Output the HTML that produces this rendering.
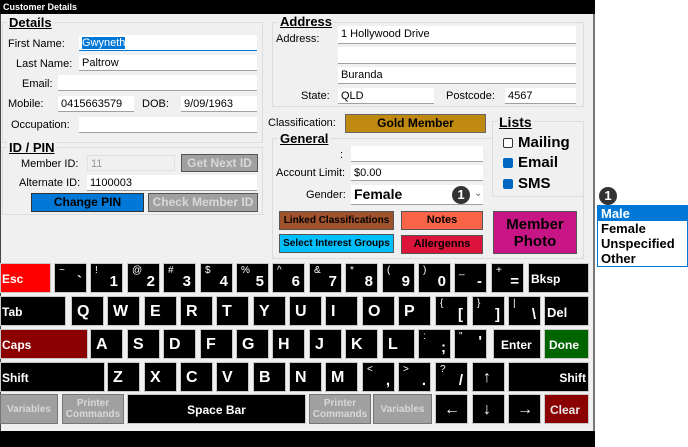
<!DOCTYPE html>
<html><head><meta charset="utf-8"><style>
*{box-sizing:border-box;margin:0;padding:0}
body{width:688px;height:447px;position:relative;background:#fff;font-family:"Liberation Sans",Arial,sans-serif;overflow:hidden}
.a{position:absolute}
#win{left:0;top:0;width:595px;height:447px;background:#f0f0f0;border-right:2px solid #777;border-left:1px solid #444}
#title{left:0;top:0;width:595px;height:14px;background:#000;color:#fff;font-size:9px;font-weight:bold;padding:2px 3px}
#bot{left:0;top:431px;width:595px;height:16px;background:#000}
.g{border:1px solid #dcdcdc}
.gl{font-size:13px;font-weight:bold;text-decoration:underline;background:#f0f0f0;padding:0 2px;line-height:14px}
.l{font-size:11px;color:#000;line-height:13px;white-space:nowrap}
.in{background:#fff;border-bottom:1px solid #a0a0a0;font-size:11px;padding:2px 3px;line-height:12px}
.b{font-size:11px;font-weight:bold;text-align:center;border:1px solid #555;display:flex;align-items:center;justify-content:center;line-height:11px;white-space:nowrap}
.k{position:absolute;background:#000;border:1px solid #c8c8c8;color:#fff;font-weight:bold}
.m{position:absolute;font-size:16px;left:5px;top:6px}
.n{position:absolute;right:4px;bottom:2px;font-size:15px}
.s{position:absolute;left:4px;top:1px;font-size:10px;font-weight:normal}
.t{position:absolute;left:1px;top:8px;font-size:12px}
.gr{background:#a0a0a0;color:#d8d8d8;font-size:10px;font-weight:bold;text-align:center;display:flex;align-items:center;justify-content:center;line-height:11px}
.cb{position:absolute;width:10px;height:10px;border:1px solid #333;border-radius:2px;background:#fff}
.cb.on{background:#0067c0;border-color:#0067c0}
.lt{position:absolute;font-size:15px;font-weight:bold;line-height:17px}
.badge{position:absolute;width:18px;height:18px;border-radius:9px;background:#333;color:#fff;font-size:13px;font-weight:bold;text-align:center;line-height:18px}
</style></head><body>
<div id="win" class="a"></div>
<div id="title" class="a">Customer Details</div>

<div class="a g" style="left:2px;top:22px;width:261px;height:121px"></div>
<div class="a gl" style="left:7px;top:16px">Details</div>
<div class="a l" style="left:8px;top:38px">First Name:</div>
<div class="a in" style="left:79px;top:35px;width:178px;height:16px;border-bottom:1px solid #0078d7"><span style="background:#0078d7;color:#fff">Gwyneth</span></div>
<div class="a l" style="left:16px;top:58px">Last Name:</div>
<div class="a in" style="left:79px;top:55px;width:178px;height:16px">Paltrow</div>
<div class="a l" style="left:22px;top:78px">Email:</div>
<div class="a in" style="left:58px;top:75px;width:199px;height:16px"></div>
<div class="a l" style="left:8px;top:98px">Mobile:</div>
<div class="a in" style="left:58px;top:96px;width:76px;height:16px">0415663579</div>
<div class="a l" style="left:142px;top:98px">DOB:</div>
<div class="a in" style="left:181px;top:96px;width:76px;height:16px">9/09/1963</div>
<div class="a l" style="left:11px;top:119px">Occupation:</div>
<div class="a in" style="left:79px;top:117px;width:178px;height:16px"></div>

<div class="a g" style="left:2px;top:147px;width:261px;height:68px"></div>
<div class="a gl" style="left:7px;top:141px">ID / PIN</div>
<div class="a l" style="left:21px;top:158px">Member ID:</div>
<div class="a in" style="left:87px;top:155px;width:88px;height:16px;background:#f0f0f0;border:1px solid #e0e0e0;color:#999">11</div>
<div class="a b" style="left:181px;top:154px;width:77px;height:18px;background:#a0a0a0;color:#d8d8d8;font-size:12px">Get Next ID</div>
<div class="a l" style="left:19px;top:177px">Alternate ID:</div>
<div class="a in" style="left:87px;top:175px;width:170px;height:16px">1100003</div>
<div class="a b" style="left:31px;top:193px;width:113px;height:19px;background:#0078d7;color:#000;font-size:12px;border-color:#333">Change PIN</div>
<div class="a b" style="left:148px;top:193px;width:110px;height:19px;background:#a0a0a0;color:#d8d8d8;font-size:12px">Check Member ID</div>

<div class="a g" style="left:272px;top:22px;width:312px;height:85px"></div>
<div class="a gl" style="left:278px;top:15px">Address</div>
<div class="a l" style="left:276px;top:33px">Address:</div>
<div class="a in" style="left:338px;top:26px;width:238px;height:18px">1 Hollywood Drive</div>
<div class="a in" style="left:338px;top:47px;width:238px;height:17px"></div>
<div class="a in" style="left:338px;top:67px;width:238px;height:17px">Buranda</div>
<div class="a l" style="left:301px;top:90px">State:</div>
<div class="a in" style="left:338px;top:88px;width:96px;height:16px">QLD</div>
<div class="a l" style="left:446px;top:90px">Postcode:</div>
<div class="a in" style="left:505px;top:88px;width:71px;height:16px">4567</div>

<div class="a l" style="left:268px;top:117px">Classification:</div>
<div class="a b" style="left:345px;top:114px;width:141px;height:19px;background:#c08a10;color:#000;font-size:12px;border-color:#666">Gold Member</div>

<!-- General -->
<div class="a g" style="left:272px;top:138px;width:312px;height:121px"></div>
<div class="a gl" style="left:278px;top:132px">General</div>

<!-- Lists (on top) -->
<div class="a g" style="left:492px;top:121px;width:92px;height:76px;background:#f0f0f0"></div>
<div class="a gl" style="left:497px;top:115px;font-size:14px">Lists</div>
<div class="cb" style="left:503px;top:138px"></div><div class="lt" style="left:518px;top:134px">Mailing</div>
<div class="cb on" style="left:503px;top:158px"></div><div class="lt" style="left:518px;top:154px">Email</div>
<div class="cb on" style="left:503px;top:179px"></div><div class="lt" style="left:518px;top:175px">SMS</div>

<div class="a l" style="left:340px;top:149px">:</div>
<div class="a in" style="left:351px;top:146px;width:132px;height:16px"></div>
<div class="a l" style="left:276px;top:167px">Account Limit:</div>
<div class="a in" style="left:351px;top:165px;width:132px;height:16px">$0.00</div>
<div class="a l" style="left:306px;top:189px">Gender:</div>
<div class="a in" style="left:351px;top:185px;width:132px;height:20px;font-size:14px;font-weight:bold;padding-top:3px">Female</div>
<div class="badge" style="left:452px;top:186px">1</div>
<div class="a" style="left:474px;top:188px;font-size:10px;color:#666">&#8964;</div>
<div class="a b" style="left:279px;top:211px;width:115px;height:19px;background:#a0522d;color:#000;font-size:10px">Linked Classifications</div>
<div class="a b" style="left:401px;top:211px;width:82px;height:19px;background:#fa6447;color:#000">Notes</div>
<div class="a b" style="left:279px;top:234px;width:115px;height:19px;background:#00bfff;color:#000;font-size:10px">Select Interest Groups</div>
<div class="a b" style="left:401px;top:235px;width:82px;height:19px;background:#dc143c;color:#000">Allergenns</div>
<div class="a b" style="left:493px;top:211px;width:84px;height:43px;background:#c71585;color:#000;font-size:15px;line-height:17px">Member<br>Photo</div>

<div class="badge" style="left:599px;top:187px">1</div>
<div class="a" style="left:597px;top:205px;width:91px;height:62px;border:1px solid #0078d7;background:#fff;font-size:13px;font-weight:bold;line-height:15px">
<div style="background:#0078d7;color:#fff;padding-left:3px">Male</div>
<div style="padding-left:3px">Female</div>
<div style="padding-left:3px">Unspecified</div>
<div style="padding-left:3px">Other</div>
</div>

<div class="k" style="left:0;top:263px;width:51px;height:30px;background:#f00"><span class="t">Esc</span></div>
<div class="k" style="left:54px;top:263px;width:33px;height:30px"><span class="s">~</span><span class="n">`</span></div>
<div class="k" style="left:90px;top:263px;width:33px;height:30px"><span class="s">!</span><span class="n">1</span></div>
<div class="k" style="left:127px;top:263px;width:33px;height:30px"><span class="s">@</span><span class="n">2</span></div>
<div class="k" style="left:163px;top:263px;width:33px;height:30px"><span class="s">#</span><span class="n">3</span></div>
<div class="k" style="left:200px;top:263px;width:33px;height:30px"><span class="s">$</span><span class="n">4</span></div>
<div class="k" style="left:236px;top:263px;width:33px;height:30px"><span class="s">%</span><span class="n">5</span></div>
<div class="k" style="left:272px;top:263px;width:33px;height:30px"><span class="s">^</span><span class="n">6</span></div>
<div class="k" style="left:309px;top:263px;width:33px;height:30px"><span class="s">&amp;</span><span class="n">7</span></div>
<div class="k" style="left:345px;top:263px;width:33px;height:30px"><span class="s">*</span><span class="n">8</span></div>
<div class="k" style="left:382px;top:263px;width:33px;height:30px"><span class="s">(</span><span class="n">9</span></div>
<div class="k" style="left:418px;top:263px;width:33px;height:30px"><span class="s">)</span><span class="n">0</span></div>
<div class="k" style="left:454px;top:263px;width:33px;height:30px"><span class="s">_</span><span class="n">-</span></div>
<div class="k" style="left:491px;top:263px;width:33px;height:30px"><span class="s">+</span><span class="n">=</span></div>
<div class="k" style="left:528px;top:263px;width:61px;height:30px"><span class="t" style="left:2px">Bksp</span></div>
<div class="k" style="left:0;top:296px;width:66px;height:30px"><span class="t">Tab</span></div>
<div class="k" style="left:71px;top:296px;width:33px;height:30px"><span class="m">Q</span></div>
<div class="k" style="left:107px;top:296px;width:33px;height:30px"><span class="m">W</span></div>
<div class="k" style="left:144px;top:296px;width:33px;height:30px"><span class="m">E</span></div>
<div class="k" style="left:180px;top:296px;width:33px;height:30px"><span class="m">R</span></div>
<div class="k" style="left:216px;top:296px;width:33px;height:30px"><span class="m">T</span></div>
<div class="k" style="left:253px;top:296px;width:33px;height:30px"><span class="m">Y</span></div>
<div class="k" style="left:289px;top:296px;width:33px;height:30px"><span class="m">U</span></div>
<div class="k" style="left:325px;top:296px;width:33px;height:30px"><span class="m">I</span></div>
<div class="k" style="left:362px;top:296px;width:33px;height:30px"><span class="m">O</span></div>
<div class="k" style="left:398px;top:296px;width:33px;height:30px"><span class="m">P</span></div>
<div class="k" style="left:435px;top:296px;width:33px;height:30px"><span class="s">{</span><span class="n">[</span></div>
<div class="k" style="left:472px;top:296px;width:33px;height:30px"><span class="s">}</span><span class="n">]</span></div>
<div class="k" style="left:508px;top:296px;width:33px;height:30px"><span class="s">|</span><span class="n">\</span></div>
<div class="k" style="left:544px;top:296px;width:45px;height:30px"><span class="t" style="left:2px;font-size:13px">Del</span></div>
<div class="k" style="left:0;top:329px;width:88px;height:30px;background:#8b0000"><span class="t">Caps</span></div>
<div class="k" style="left:90px;top:329px;width:33px;height:30px"><span class="m">A</span></div>
<div class="k" style="left:127px;top:329px;width:33px;height:30px"><span class="m">S</span></div>
<div class="k" style="left:163px;top:329px;width:33px;height:30px"><span class="m">D</span></div>
<div class="k" style="left:200px;top:329px;width:33px;height:30px"><span class="m">F</span></div>
<div class="k" style="left:236px;top:329px;width:33px;height:30px"><span class="m">G</span></div>
<div class="k" style="left:272px;top:329px;width:33px;height:30px"><span class="m">H</span></div>
<div class="k" style="left:309px;top:329px;width:33px;height:30px"><span class="m">J</span></div>
<div class="k" style="left:345px;top:329px;width:33px;height:30px"><span class="m">K</span></div>
<div class="k" style="left:382px;top:329px;width:33px;height:30px"><span class="m">L</span></div>
<div class="k" style="left:418px;top:329px;width:33px;height:30px"><span class="s">:</span><span class="n">;</span></div>
<div class="k" style="left:454px;top:329px;width:33px;height:30px"><span class="s">"</span><span class="n" style="bottom:8px">'</span></div>
<div class="k" style="left:493px;top:329px;width:48px;height:30px"><span class="t" style="left:7px">Enter</span></div>
<div class="k" style="left:544px;top:329px;width:45px;height:30px;background:#006400"><span class="t" style="left:4px">Done</span></div>
<div class="k" style="left:0;top:362px;width:105px;height:30px"><span class="t">Shift</span></div>
<div class="k" style="left:107px;top:362px;width:33px;height:30px"><span class="m">Z</span></div>
<div class="k" style="left:144px;top:362px;width:33px;height:30px"><span class="m">X</span></div>
<div class="k" style="left:180px;top:362px;width:33px;height:30px"><span class="m">C</span></div>
<div class="k" style="left:216px;top:362px;width:33px;height:30px"><span class="m">V</span></div>
<div class="k" style="left:253px;top:362px;width:33px;height:30px"><span class="m">B</span></div>
<div class="k" style="left:289px;top:362px;width:33px;height:30px"><span class="m">N</span></div>
<div class="k" style="left:325px;top:362px;width:33px;height:30px"><span class="m">M</span></div>
<div class="k" style="left:362px;top:362px;width:33px;height:30px"><span class="s">&lt;</span><span class="n">,</span></div>
<div class="k" style="left:398px;top:362px;width:33px;height:30px"><span class="s">&gt;</span><span class="n">.</span></div>
<div class="k" style="left:435px;top:362px;width:33px;height:30px"><span class="s">?</span><span class="n">/</span></div>
<div class="k" style="left:472px;top:362px;width:33px;height:30px;font-weight:normal"><span class="m" style="left:10px">↑</span></div>
<div class="k" style="left:508px;top:362px;width:81px;height:30px"><span class="t" style="left:auto;right:2px">Shift</span></div>
<div class="a gr" style="left:0;top:394px;width:58px;height:30px;border:1px solid #777">Variables</div>
<div class="a gr" style="left:62px;top:394px;width:62px;height:30px;border:1px solid #777">Printer<br>Commands</div>
<div class="k" style="left:127px;top:394px;width:179px;height:30px"><span class="t" style="left:0;width:100%;text-align:center">Space Bar</span></div>
<div class="a gr" style="left:309px;top:394px;width:62px;height:30px;border:1px solid #777">Printer<br>Commands</div>
<div class="a gr" style="left:373px;top:394px;width:59px;height:30px;border:1px solid #777">Variables</div>
<div class="k" style="left:435px;top:394px;width:33px;height:30px;font-weight:normal"><span class="m" style="left:8px">←</span></div>
<div class="k" style="left:472px;top:394px;width:33px;height:30px;font-weight:normal"><span class="m" style="left:10px">↓</span></div>
<div class="k" style="left:508px;top:394px;width:33px;height:30px;font-weight:normal"><span class="m" style="left:8px">→</span></div>
<div class="k" style="left:544px;top:394px;width:45px;height:30px;background:#8b0000"><span class="t" style="left:5px;color:#e8e8e8">Clear</span></div>

<div id="bot" class="a"></div>
</body></html>
